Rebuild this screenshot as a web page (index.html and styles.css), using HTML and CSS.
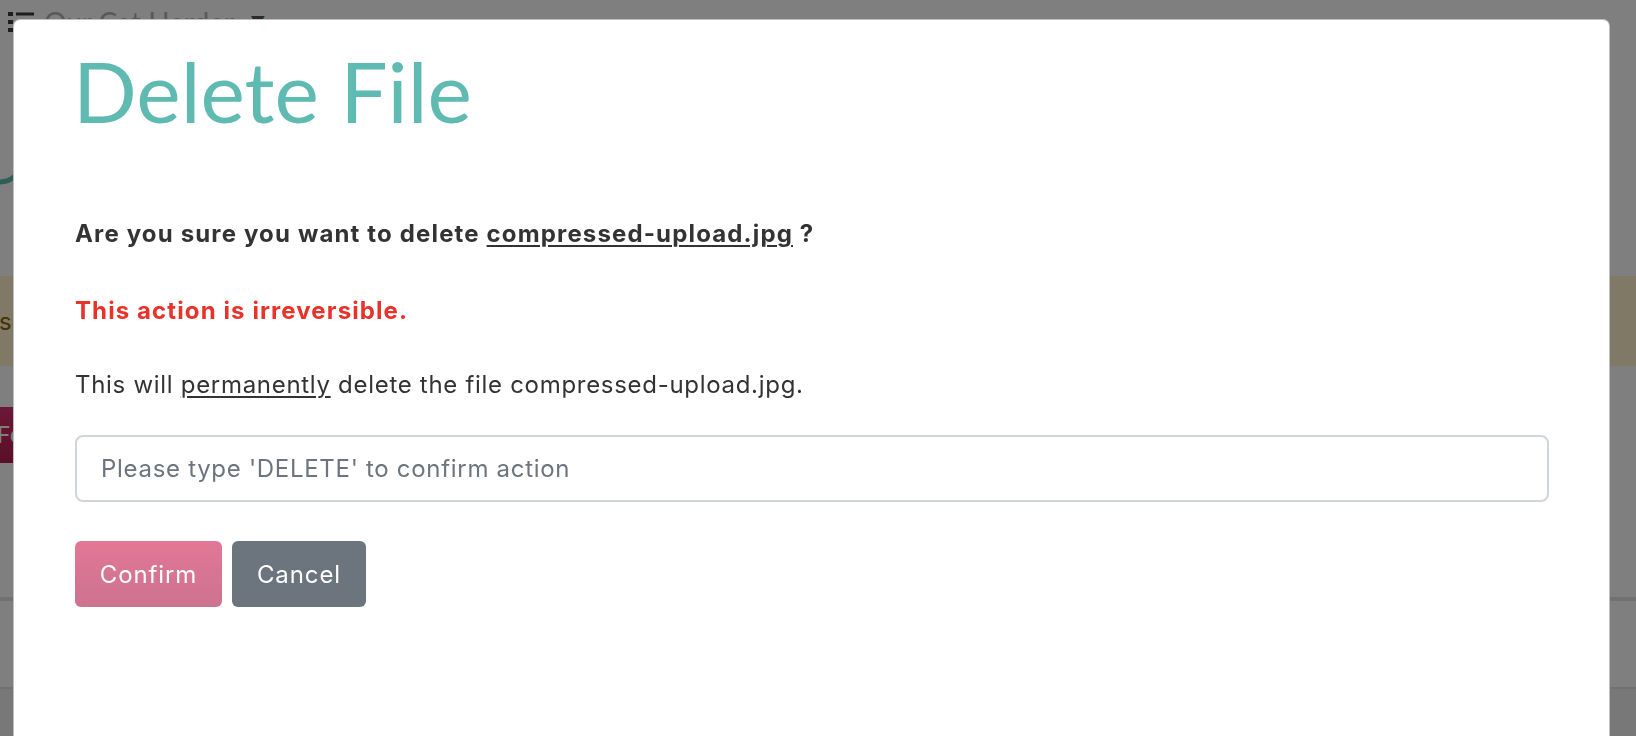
FILE: index.html
```html
<!DOCTYPE html>
<html lang="en">
<head>
<meta charset="utf-8">
<title>Delete File</title>
<link rel="stylesheet" href="styles.css">
</head>
<body>
<div class="page">
  <header class="navbar">
    <svg class="nav-icon" width="26" height="20" viewBox="0 0 26 20">
      <rect x="0" y="0" width="5" height="4" fill="#3a3a3a"/>
      <rect x="8" y="0.5" width="18" height="3" fill="#3a3a3a"/>
      <rect x="0" y="8" width="5" height="4" fill="#3a3a3a"/>
      <rect x="8" y="8.5" width="18" height="3" fill="#3a3a3a"/>
      <rect x="0" y="16" width="5" height="4" fill="#3a3a3a"/>
      <rect x="8" y="16.5" width="18" height="3" fill="#3a3a3a"/>
    </svg>
    <span class="nav-title">Our Cat Herder</span>
    <span class="nav-caret">&#9660;</span>
  </header>
  <div class="brand">
    <svg class="brand-logo" width="40" height="40" viewBox="0 0 40 40">
      <circle cx="0" cy="0" r="22" fill="none" stroke="#5fbab1" stroke-width="5"/>
    </svg>
  </div>
  <div class="alert"><span class="alert-text">select</span></div>
  <div class="actions"><span class="btn-page">Form</span></div>
  <div class="table">
    <div class="row row-first"></div>
    <div class="row"></div>
    <div class="row row-last"></div>
  </div>
</div>

<div class="backdrop"></div>

<div class="modal">
  <h1 class="modal-title">Delete File</h1>
  <p class="question">Are you sure you want to delete <u>compressed-upload.jpg</u> ?</p>
  <p class="warning">This action is irreversible.</p>
  <p class="info">This will <u>permanently</u> delete the file compressed-upload.jpg.</p>
  <input class="confirm-input" type="text" placeholder="Please type 'DELETE' to confirm action">
  <div class="buttons">
    <button class="btn btn-confirm">Confirm</button>
    <button class="btn btn-cancel">Cancel</button>
  </div>
</div>
</body>
</html>
```
FILE: styles.css
```css
* { box-sizing: border-box; }
html, body {
  margin: 0;
  padding: 0;
  height: 100%;
  overflow: hidden;
}
body {
  font-family: Inter, "Liberation Sans", sans-serif;
  color: #333;
  background: #fff;
}

/* underlying page */
.page {
  display: flex;
  flex-direction: column;
}
.navbar {
  height: 44px;
  display: flex;
  align-items: flex-start;
  padding: 12px 0 0 8px;
  gap: 10px;
}
.nav-icon { flex: none; }
.nav-title {
  font-family: Lato, sans-serif;
  font-size: 28px;
  line-height: 20px;
  color: #b3b3b3;
}
.nav-caret {
  font-size: 15px;
  line-height: 20px;
  color: #555;
  margin-left: 6px;
}
.brand {
  height: 232px;
  padding-top: 96px;
}
.brand-logo { display: block; margin-top: 20px; }
.alert {
  height: 90px;
  background: #fff3cd;
  display: flex;
  align-items: center;
  overflow: hidden;
}
.alert-text {
  color: #856404;
  font-size: 24px;
  margin-left: -1px;
  white-space: nowrap;
}
.actions {
  padding-top: 41px;
  height: 231px;
}
.btn-page {
  display: flex;
  align-items: center;
  width: 120px;
  height: 56px;
  background: linear-gradient(#d9306c, #b21e50);
  color: #fff;
  font-size: 23px;
  margin-left: -10px;
  padding-left: 7px;
  white-space: nowrap;
  overflow: hidden;
}
.table { display: flex; flex-direction: column; }
.row {
  height: 88px;
  border-top: 2px solid #dee2e6;
}
.row-first { height: 0; }
.row-last { background: #f0f0f0; height: 60px; }

.backdrop {
  position: fixed;
  inset: 0;
  background: rgba(0, 0, 0, 0.5);
}

/* modal */
.modal {
  position: absolute;
  top: 19px;
  left: 13px;
  right: 26px;
  height: 760px;
  background: #fff;
  border: 1px solid rgba(0, 0, 0, 0.25);
  border-radius: 7px;
  padding: 0 60px 0 61px;
}
.modal-title {
  font-family: Lato, sans-serif;
  font-weight: 400;
  font-size: 84px;
  line-height: 1;
  color: #5fbab1;
  margin: 29px 0 0 -2px;
}
.modal p {
  font-size: 24px;
  line-height: 30px;
  margin: 0;
  letter-spacing: 0.7px;
}
.question {
  font-weight: 700;
  padding-top: 86px;
  letter-spacing: 1.15px !important;
}
.warning {
  font-weight: 700;
  color: #e8322a;
  padding-top: 47px;
  letter-spacing: 1.1px !important;
}
.info {
  padding-top: 44px;
}
.modal u { text-underline-offset: 3px; text-decoration-thickness: 1.5px; }
.confirm-input {
  display: block;
  width: 100%;
  height: 67px;
  margin-top: 35px;
  border: 2px solid #d1d5db;
  border-radius: 8px;
  padding: 0 24px;
  font-family: Inter, "Liberation Sans", sans-serif;
  font-size: 24px;
  letter-spacing: 0.7px;
  color: #495057;
  outline: none;
}
.confirm-input::placeholder { color: #6c757d; }
.buttons {
  display: flex;
  gap: 10px;
  margin-top: 39px;
}
.btn {
  height: 66px;
  border: none;
  border-radius: 6px;
  padding: 0;
  font-family: Inter, "Liberation Sans", sans-serif;
  font-size: 24px;
  letter-spacing: 0.9px;
  color: #fff;
}
.btn-confirm {
  width: 147px;
  background: linear-gradient(#e27796, #cc7390);
}
.btn-cancel {
  width: 134px;
  background: #6c757d;
}
```
